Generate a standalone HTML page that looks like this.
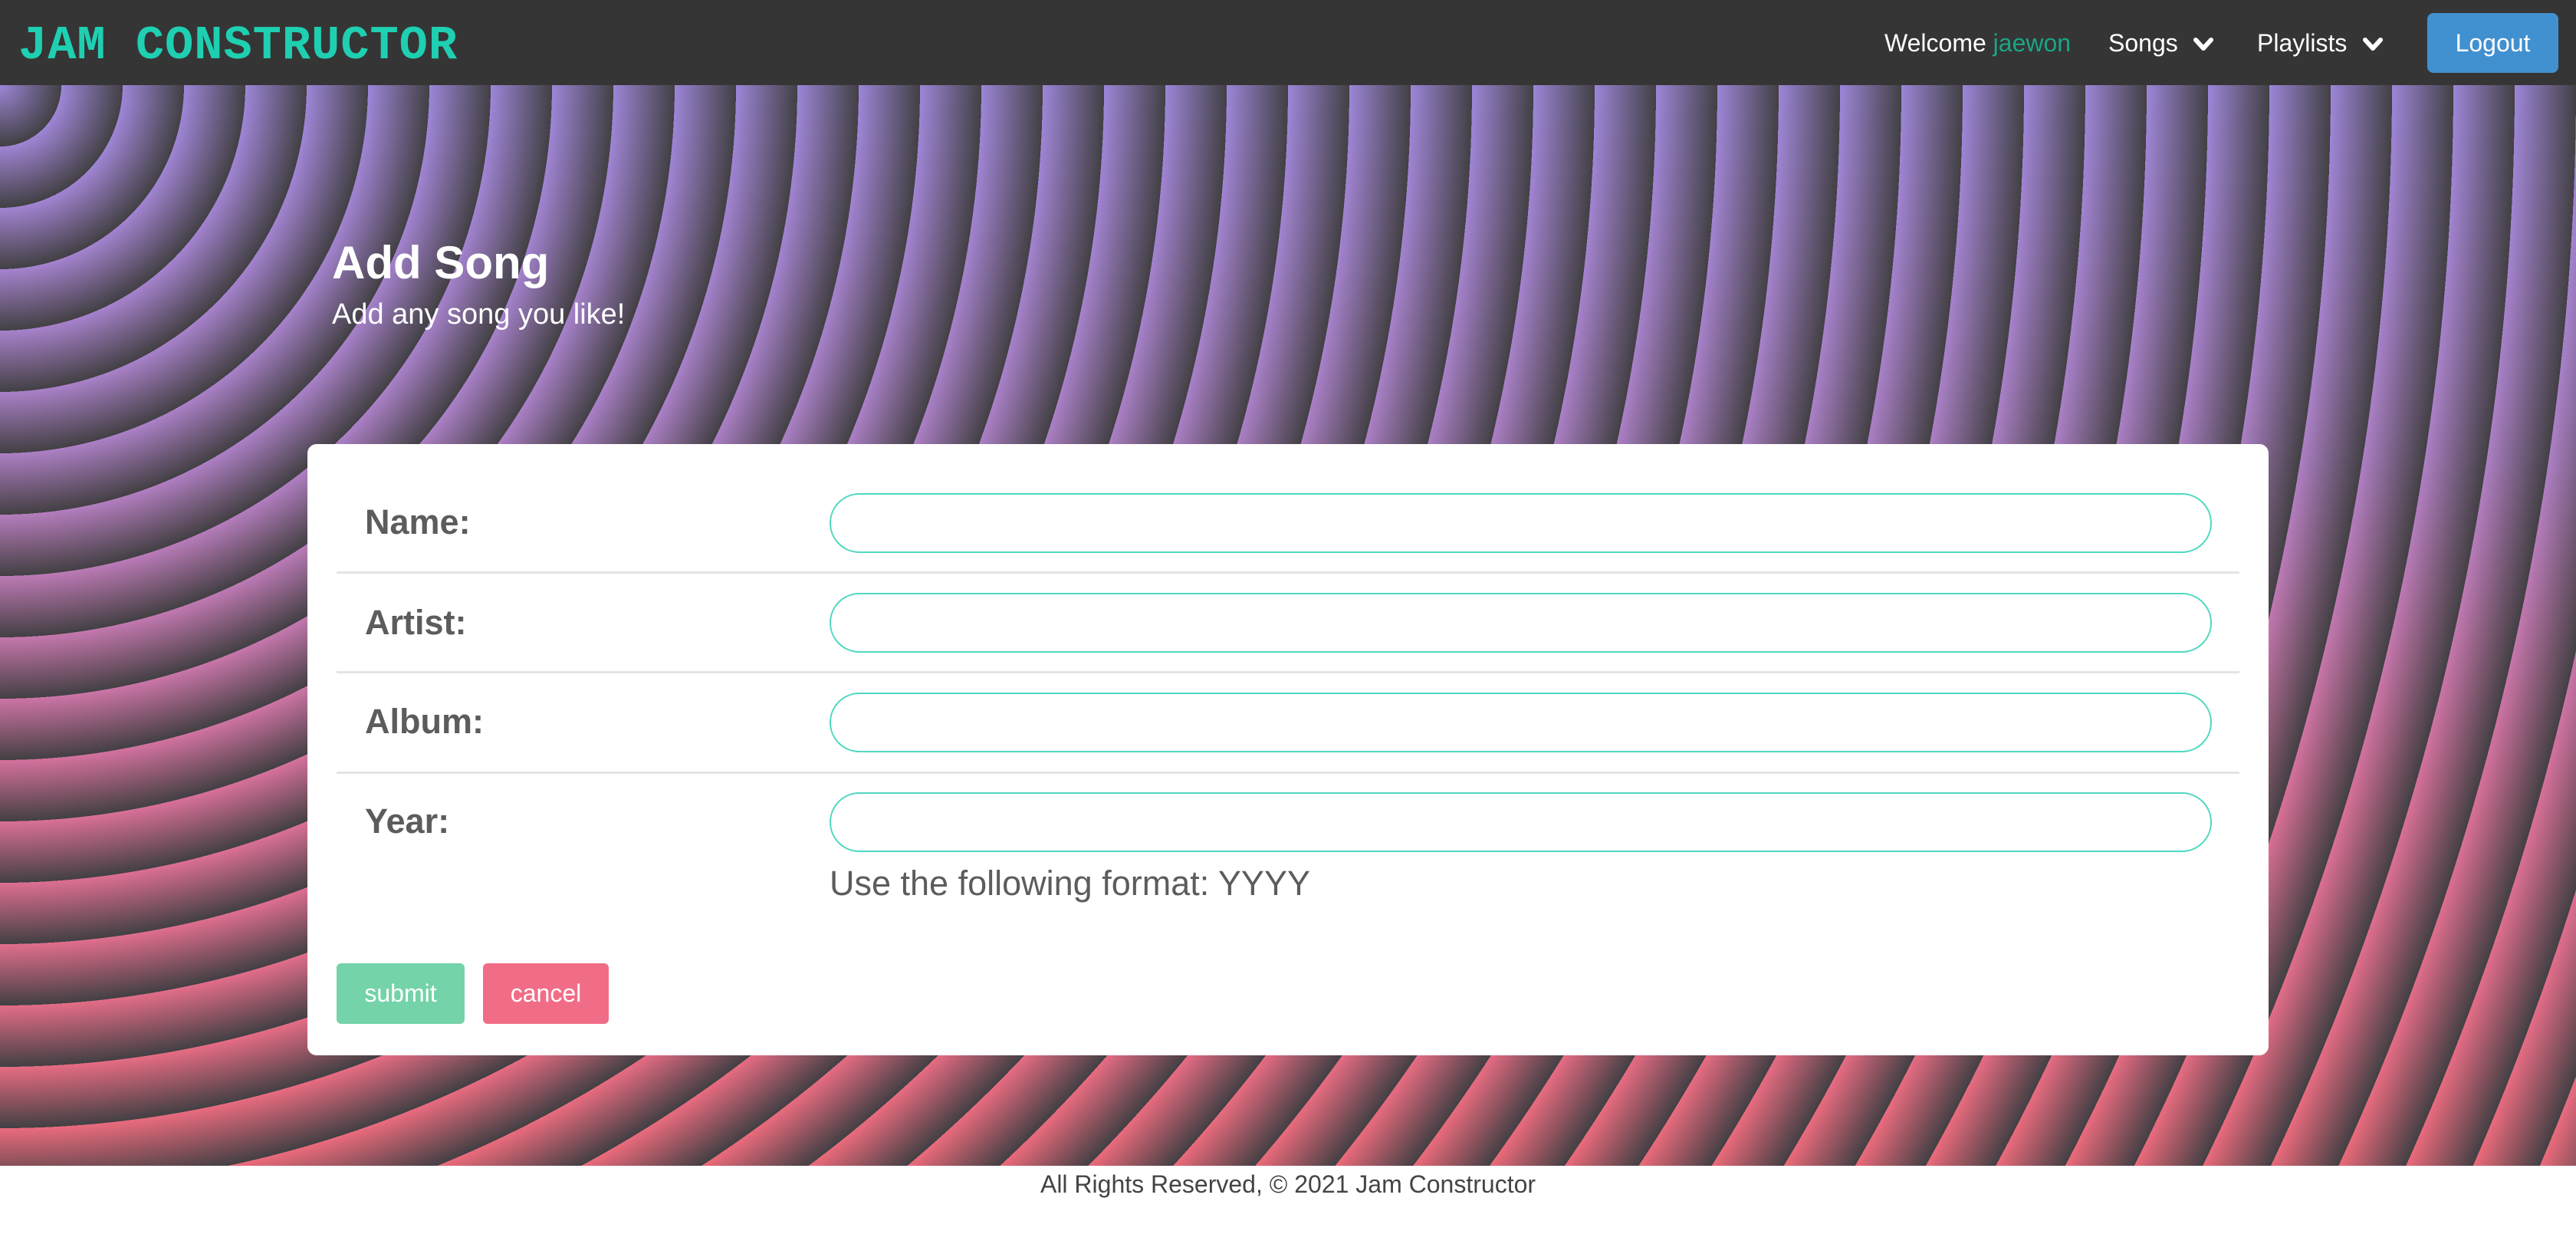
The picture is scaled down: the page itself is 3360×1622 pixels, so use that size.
<!DOCTYPE html>
<html><head><meta charset="utf-8"><style>
*{margin:0;padding:0;box-sizing:border-box}
body{width:3360px;height:1622px;background:#fff;font-family:"Liberation Sans",Arial,sans-serif;position:relative;overflow:hidden}
.nav{position:absolute;left:0;top:0;width:3360px;height:111px;background:#353535}
.logo{position:absolute;left:24px;top:24px;font-family:"Liberation Mono","Courier New",monospace;font-weight:bold;font-size:62px;color:#1fcfb1;letter-spacing:1px}
.nt{position:absolute;top:38px;font-size:32px;color:#fff}
.chev{position:absolute;top:46px}
.logout{position:absolute;left:3166px;top:17px;width:171px;height:78px;background:#4190d0;border-radius:8px;color:#fff;font-size:32px;text-align:center;line-height:78px}
.hero{position:absolute;left:0;top:111px;width:3360px;height:1409px;
background:repeating-radial-gradient(circle at 0 0,rgba(66,64,68,0) 0px,rgba(66,64,68,1) 80px),linear-gradient(#9c86d8 0%,#ad7fc4 35%,#d8709a 65%,#ec6a7a 100%)}
h1{position:absolute;left:433px;top:308px;font-size:60px;font-weight:bold;color:#fff}
.sub{position:absolute;left:433px;top:389px;font-size:38px;color:#fff}
.card{position:absolute;left:401px;top:579px;width:2558px;height:797px;background:#fff;border-radius:12px}
.lbl{position:absolute;left:75px;font-size:45px;font-weight:bold;color:#5c5c5c}
.inp{position:absolute;left:681px;width:1803px;height:78px;border:2px solid #4fd8c0;border-radius:40px}
.sep{position:absolute;left:38px;width:2482px;height:3px;background:#e4e4e4}
.help{position:absolute;left:681px;top:547px;font-size:45px;color:#5c5c5c}
.btn{position:absolute;top:677px;height:79px;border-radius:6px;color:#fff;font-size:32px;text-align:center;line-height:79px}
.foot{position:absolute;left:0;width:3360px;top:1526px;text-align:center;font-size:32px;color:#444}
</style></head><body>
<div class="nav">
<div class="logo">JAM CONSTRUCTOR</div>
<div class="nt" style="left:2458px">Welcome <span style="color:#1aa585">jaewon</span></div>
<div class="nt" style="left:2750px">Songs</div>
<svg class="chev" style="left:2860px" width="28" height="24" viewBox="0 0 28 24"><polyline points="4,6 14,17 24,6" fill="none" stroke="#fff" stroke-width="6" stroke-linecap="round" stroke-linejoin="round"/></svg>
<div class="nt" style="left:2944px">Playlists</div>
<svg class="chev" style="left:3081px" width="28" height="24" viewBox="0 0 28 24"><polyline points="4,6 14,17 24,6" fill="none" stroke="#fff" stroke-width="6" stroke-linecap="round" stroke-linejoin="round"/></svg>
<div class="logout">Logout</div>
</div>
<div class="hero"></div>
<h1>Add Song</h1>
<div class="sub">Add any song you like!</div>
<div class="card">
<div class="lbl" style="top:76px">Name:</div>
<div class="inp" style="top:64px"></div>
<div class="sep" style="top:166px"></div>
<div class="lbl" style="top:207px">Artist:</div>
<div class="inp" style="top:194px"></div>
<div class="sep" style="top:296px"></div>
<div class="lbl" style="top:336px">Album:</div>
<div class="inp" style="top:324px"></div>
<div class="sep" style="top:427px"></div>
<div class="lbl" style="top:466px">Year:</div>
<div class="inp" style="top:454px"></div>
<div class="help">Use the following format: YYYY</div>
<div class="btn" style="left:38px;width:167px;background:#74d3a8">submit</div>
<div class="btn" style="left:229px;width:164px;background:#f16d87">cancel</div>
</div>
<div class="foot">All Rights Reserved, © 2021 Jam Constructor</div>
</body></html>
